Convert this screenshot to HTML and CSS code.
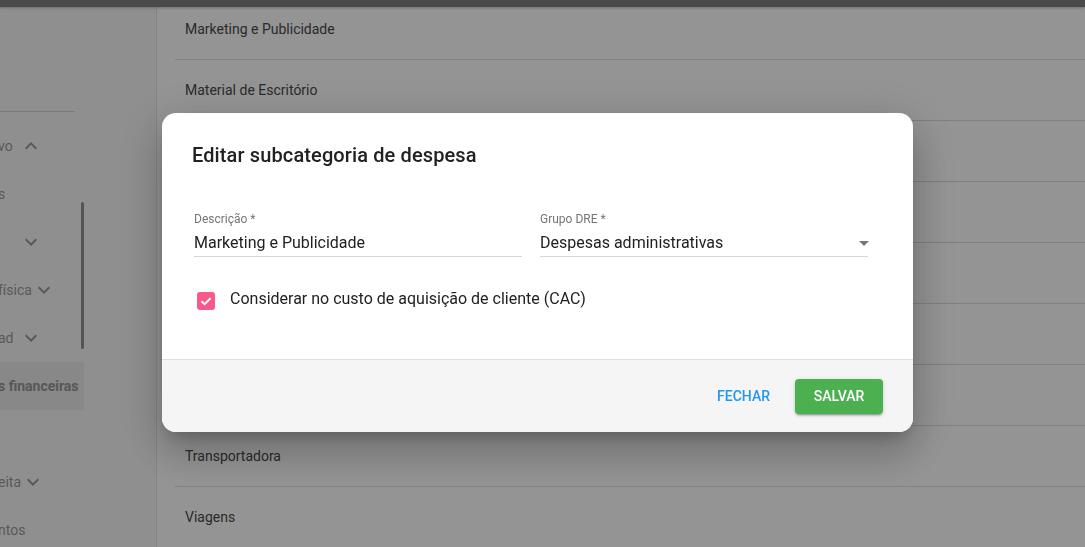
FILE: index.html
```html
<!DOCTYPE html>
<html lang="pt-BR">
<head>
<meta charset="utf-8">
<title>Subcategorias de despesa</title>
<link rel="stylesheet" href="styles.css">
</head>
<body>
<header class="topbar"></header>
<div class="app">
  <aside class="sidebar">
    <div class="sidebar-head"></div>
    <hr class="sidebar-divider">
    <nav class="nav">
      <div class="nav-item"><span class="nav-label">vo</span><svg class="chev" viewBox="0 0 24 24"><path d="M12 8l-6 6 1.41 1.41L12 10.83l4.59 4.58L18 14z"/></svg></div>
      <div class="nav-item"><span class="nav-label">s</span></div>
      <div class="nav-item"><span class="nav-label"></span><svg class="chev" viewBox="0 0 24 24"><path d="M16.59 8.59L12 13.17 7.41 8.59 6 10l6 6 6-6z"/></svg></div>
      <div class="nav-item"><span class="nav-label nav-label--wide">física</span><svg class="chev" viewBox="0 0 24 24"><path d="M16.59 8.59L12 13.17 7.41 8.59 6 10l6 6 6-6z"/></svg></div>
      <div class="nav-item"><span class="nav-label">ad</span><svg class="chev" viewBox="0 0 24 24"><path d="M16.59 8.59L12 13.17 7.41 8.59 6 10l6 6 6-6z"/></svg></div>
      <div class="nav-item nav-item--active"><span class="nav-label">s financeiras</span></div>
      <div class="nav-item"></div>
      <div class="nav-item"><span class="nav-label">eita</span><svg class="chev" viewBox="0 0 24 24"><path d="M16.59 8.59L12 13.17 7.41 8.59 6 10l6 6 6-6z"/></svg></div>
      <div class="nav-item"><span class="nav-label">ntos</span></div>
    </nav>
    <div class="scrollbar"></div>
  </aside>
  <main class="main">
    <ul class="list">
      <li class="list-item">Marketing e Publicidade</li>
      <li class="list-item">Material de Escritório</li>
      <li class="list-item">Material de Limpeza</li>
      <li class="list-item">Serviços Contábeis</li>
      <li class="list-item">Software e Licenças</li>
      <li class="list-item">Telefonia e Internet</li>
      <li class="list-item">Treinamentos</li>
      <li class="list-item">Transportadora</li>
      <li class="list-item">Viagens</li>
    </ul>
  </main>
</div>
<div class="overlay"></div>
<div class="dialog" role="dialog">
  <div class="dialog-body">
    <h2 class="dialog-title">Editar subcategoria de despesa</h2>
    <div class="fields">
      <div class="field">
        <label class="field-label">Descrição *</label>
        <div class="field-input"><span class="field-value">Marketing e Publicidade</span></div>
      </div>
      <div class="field">
        <label class="field-label">Grupo DRE *</label>
        <div class="field-input"><span class="field-value">Despesas administrativas</span><span class="caret"></span></div>
      </div>
    </div>
    <label class="check-row">
      <span class="checkbox"><svg viewBox="0 0 18 18"><polyline points="4.5,9.2 7.6,12.2 13.6,6.2"/></svg></span>
      <span class="check-label">Considerar no custo de aquisição de cliente (CAC)</span>
    </label>
  </div>
  <div class="dialog-footer">
    <button class="btn btn-text">Fechar</button>
    <button class="btn btn-primary">Salvar</button>
  </div>
</div>
</body>
</html>
```

FILE: styles.css
```css
* { box-sizing: border-box; }

html, body {
  margin: 0;
  padding: 0;
  width: 1085px;
  height: 547px;
  overflow: hidden;
  font-family: Roboto, "Liberation Sans", Arial, sans-serif;
  background: #ffffff;
}

.topbar {
  position: fixed;
  top: 0;
  left: 0;
  right: 0;
  height: 7px;
  background: #808080;
  box-shadow: 0 1px 3px rgba(0, 0, 0, 0.25);
  z-index: 5;
}

.app {
  display: flex;
  height: 547px;
}

.sidebar {
  position: relative;
  width: 157px;
  flex: 0 0 157px;
  background: #f7f7f7;
  border-right: 1px solid #e4e4e4;
  overflow: hidden;
}

.sidebar-head {
  height: 111px;
}

.sidebar-divider {
  margin: 0;
  width: 75px;
  border: 0;
  border-top: 1px solid #d2d2d2;
}

.nav {
  width: 84px;
  padding-top: 10px;
}

.nav-item {
  display: flex;
  align-items: center;
  height: 48px;
  font-size: 14px;
  color: #9a9a9a;
  white-space: nowrap;
}

.nav-label {
  flex: 0 0 21px;
  margin-left: -2px;
}

.nav-label--wide {
  flex-basis: 34px;
}

.nav-item--active {
  background: #eaeaea;
}

.nav-item--active .nav-label {
  font-weight: 700;
  flex: none;
  color: #979797;
}

.chev {
  width: 24px;
  height: 24px;
  fill: #9a9a9a;
  flex: none;
}

.scrollbar {
  position: absolute;
  left: 81px;
  top: 202px;
  width: 3px;
  height: 147px;
  border-radius: 2px;
  background: #939393;
}

.main {
  flex: 1;
  padding-left: 18px;
  overflow: hidden;
}

.list {
  list-style: none;
  margin: -1px 0 0;
  padding: 0;
}

.list-item {
  height: 61px;
  display: flex;
  align-items: center;
  padding-left: 10px;
  border-bottom: 1px solid #dcdcdc;
  font-size: 14px;
  color: #4a4a4a;
}

.overlay {
  position: fixed;
  inset: 0;
  background: rgba(0, 0, 0, 0.42);
  z-index: 10;
}

.dialog {
  position: fixed;
  left: 162px;
  top: 113px;
  width: 751px;
  height: 319px;
  background: #ffffff;
  border-radius: 14px;
  overflow: hidden;
  display: flex;
  flex-direction: column;
  z-index: 11;
  box-shadow: 0 11px 15px -7px rgba(0, 0, 0, 0.2),
              0 24px 38px 3px rgba(0, 0, 0, 0.14),
              0 9px 46px 8px rgba(0, 0, 0, 0.12);
}

.dialog-body {
  flex: 1;
  padding: 26px 45px 0 30px;
}

.dialog-title {
  margin: 0;
  font-size: 20px;
  line-height: 32px;
  font-weight: 500;
  letter-spacing: 0.12px;
  color: #212121;
}

.fields {
  display: grid;
  grid-template-columns: 328px 328px;
  column-gap: 18px;
  margin-top: 41px;
  padding-left: 2px;
}

.field-label {
  display: block;
  font-size: 12px;
  line-height: 14px;
  color: #757575;
}

.field-input {
  display: flex;
  align-items: center;
  padding: 5px 0 1px;
  border-bottom: 1px solid #d6d6d6;
}

.field-value {
  flex: 1;
  font-size: 16px;
  line-height: 24px;
  color: #212121;
}

.caret {
  width: 0;
  height: 0;
  border-left: 5px solid transparent;
  border-right: 5px solid transparent;
  border-top: 5px solid #757575;
  margin-right: -1px;
}

.check-row {
  display: flex;
  align-items: flex-start;
  gap: 15px;
  margin-top: 30px;
  padding-left: 5px;
}

.checkbox {
  width: 18px;
  height: 18px;
  margin-top: 5px;
  border-radius: 3px;
  background: #f8598b;
  flex: none;
}

.checkbox svg {
  display: block;
  width: 18px;
  height: 18px;
  fill: none;
  stroke: #ffffff;
  stroke-width: 2;
}

.check-label {
  font-size: 16px;
  line-height: 24px;
  color: #212121;
}

.dialog-footer {
  height: 73px;
  flex: none;
  display: flex;
  justify-content: flex-end;
  align-items: center;
  gap: 9px;
  padding-right: 30px;
  background: #f5f5f5;
  border-top: 1px solid #e0e0e0;
}

.btn {
  height: 35px;
  padding: 0 16px;
  border: 0;
  border-radius: 4px;
  font-family: Roboto, "Liberation Sans", Arial, sans-serif;
  font-size: 14px;
  font-weight: 500;
  text-transform: uppercase;
  background: transparent;
  cursor: pointer;
}

.btn-text {
  color: #2196f3;
}

.btn-primary {
  min-width: 88px;
  background: #4caf50;
  color: #ffffff;
  box-shadow: 0 3px 1px -2px rgba(0, 0, 0, 0.2),
              0 2px 2px 0 rgba(0, 0, 0, 0.14),
              0 1px 5px 0 rgba(0, 0, 0, 0.12);
}
```
